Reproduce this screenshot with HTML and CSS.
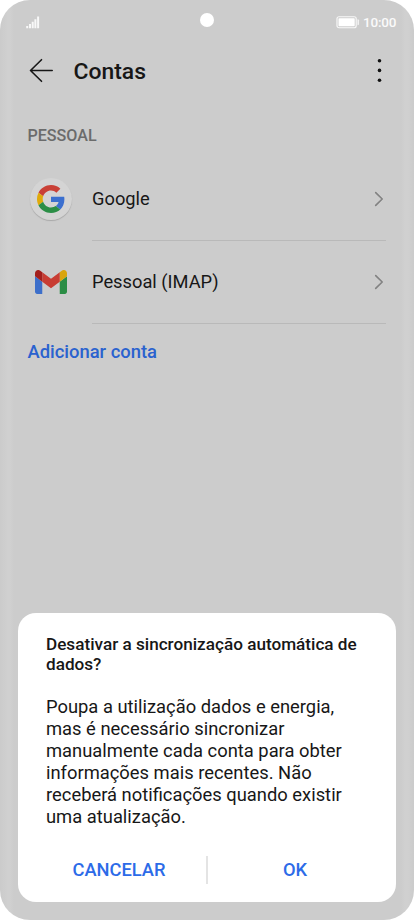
FILE: index.html
```html
<!DOCTYPE html>
<html lang="pt">
<head>
<meta charset="utf-8">
<title>Contas</title>
<link rel="stylesheet" href="styles.css">
</head>
<body>
<div class="phone">
  <div class="status">
    <svg class="signal" width="14" height="13" viewBox="0 0 14 13" fill="#f8f8f8"><path d="M0.200 10h2v2.200h-2zM3 8h2v4.200H3zM5.700 5.700h2v6.500h-2zM8.400 3.200h2v9h-2zM11.100 0.400h2v11.800h-2z"/></svg>
    <span class="camera"></span>
    <div class="status-right">
      <svg width="24" height="13" viewBox="0 0 24 13"><rect x="1" y=".75" width="19.200" height="11" rx="2" fill="none" stroke="#f7f7f7" stroke-width="1.200"/><rect x="2.500" y="2.300" width="16.200" height="7.900" rx=".6" fill="#fff"/><path d="M21.500 3.300q1.400 0 1.400 1v3.900q0 1-1.400 1z" fill="#f5f5f5"/></svg>
      <span class="time">10:00</span>
    </div>
  </div>
  <header class="header">
    <svg width="26" height="26" viewBox="0 0 26 26" fill="none" stroke="#171717" stroke-width="1.600" stroke-linecap="round" stroke-linejoin="round"><path d="M24.200 12.500H2.500M13.500 1.700L2.500 12.500l11 10.800"/></svg>
    <h1 class="title">Contas</h1>
    <svg class="more" width="6" height="26" viewBox="0 0 6 26" fill="#111"><circle cx="3.500" cy="2.700" r="1.800"/><circle cx="3.500" cy="12.400" r="1.800"/><circle cx="3.500" cy="22.200" r="1.800"/></svg>
  </header>
  <h2 class="section">PESSOAL</h2>
  <div class="row">
    <span class="icon"><span class="google">
      <svg width="28" height="28" viewBox="0 0 48 48"><path fill="#c94036" d="M24 9.5c3.54 0 6.71 1.22 9.21 3.6l6.85-6.85C35.9 2.38 30.47 0 24 0 14.62 0 6.51 5.38 2.56 13.22l7.98 6.19C12.43 13.72 17.74 9.5 24 9.5z"/><path fill="#3b6fcf" d="M46.98 24.55c0-1.57-.15-3.09-.38-4.55H24v9.02h12.94c-.58 2.96-2.26 5.48-4.78 7.18l7.73 6c4.51-4.18 7.09-10.36 7.09-17.65z"/><path fill="#e0aa0b" d="M10.53 28.59A14.5 14.5 0 0 1 9.77 24c0-1.6.27-3.14.76-4.59l-7.98-6.19A23.9 23.9 0 0 0 0 24c0 3.88.92 7.54 2.56 10.78z"/><path fill="#2b8e46" d="M24 48c6.48 0 11.93-2.13 15.89-5.81l-7.73-6c-2.15 1.45-4.92 2.3-8.16 2.3-6.26 0-11.57-4.22-13.47-9.91l-7.98 6.19C6.51 42.62 14.62 48 24 48z"/></svg>
    </span></span>
    <div class="row-body"><span>Google</span>
      <svg width="10" height="16" viewBox="0 0 10 16" fill="none" stroke="#828282" stroke-width="1.600" stroke-linecap="round" stroke-linejoin="round"><path d="M1.700 1.600L8.200 8l-6.500 6.400"/></svg>
    </div>
  </div>
  <div class="row">
    <span class="icon">
      <svg class="gmail" width="32" height="24" viewBox="52 42 88 66"><path fill="#3d6fca" d="M58 108h14V74L52 59v43c0 3.320 2.690 6 6 6"/><path fill="#2b8d45" d="M120 108h14c3.320 0 6-2.690 6-6V59l-20 15"/><path fill="#d9a50c" d="M120 48v26l20-15v-8c0-7.420-8.470-11.650-14.400-7.200"/><path fill="#c83d33" d="M72 74V48l24 18 24-18v26L96 92"/><path fill="#a31f1c" d="M52 51v8l20 15V48l-5.600-4.200c-5.940-4.450-14.400-.22-14.400 7.200"/></svg>
    </span>
    <div class="row-body"><span>Pessoal (IMAP)</span>
      <svg width="10" height="16" viewBox="0 0 10 16" fill="none" stroke="#828282" stroke-width="1.600" stroke-linecap="round" stroke-linejoin="round"><path d="M1.700 1.600L8.200 8l-6.500 6.400"/></svg>
    </div>
  </div>
  <a class="add">Adicionar conta</a>
  <section class="dialog">
    <h3 class="question">Desativar a sincronização automática de<br>dados?</h3>
    <p class="message">Poupa a utilização dados e energia,<br>mas é necessário sincronizar<br>manualmente cada conta para obter<br>informações mais recentes. Não<br>receberá notificações quando existir<br>uma atualização.</p>
    <div class="actions"><span>CANCELAR</span><span class="divider"></span><span>OK</span></div>
  </section>
</div>
</body>
</html>
```
FILE: styles.css
```css
* { box-sizing: border-box; }
body { margin: 0; background: #fff; font-family: Roboto, sans-serif; color: #171717; }
h1, h2, h3, p { margin: 0; font-weight: 500; }
svg { display: block; flex: none; }
.phone {
  width: 414px; height: 920px; overflow: hidden; border-radius: 30px;
  display: flex; flex-direction: column;
  background: linear-gradient(90deg, #cbcbcb 0, #d0d0d0 8px, #d0d0d0 10px, #cccccc 14px, #cccccc 401px, #d0d0d0 405px, #d0d0d0 408px, #cbcbcb 414px);
}
.status { height: 44px; flex: none; display: grid; grid-template-columns: 1fr 14px 1fr; align-items: center; padding: 0 18px 0 26px; }
.camera { width: 14px; height: 14px; border-radius: 50%; background: #fff; margin: -4px 0 0 -4px; }
.status-right { display: flex; justify-content: flex-end; align-items: center; gap: 3px; }
.time { font-size: 13.5px; line-height: 16px; color: #fafafa; width: 33px; white-space: nowrap; font-weight: 500; letter-spacing: -0.2px; }
.header { height: 54px; flex: none; display: flex; align-items: center; padding: 0 32px 0 28px; }
.title { font-size: 22.9px; line-height: 28px; margin: 2px 0 0 19.5px; }
.more { margin-left: auto; }
.section { margin: 28px 0 0 27.5px; font-size: 16.1px; line-height: 20px; height: 20px; flex: none; color: #6b6b6b; }
.row { height: 83px; flex: none; display: flex; padding-right: 28px; }
.section + .row { margin-top: 12px; }
.icon { width: 92px; padding: 0 11px 0 20px; flex: none; display: flex; align-items: center; justify-content: center; }
.google { width: 42px; height: 42px; margin-top: -1px; border-radius: 50%; background: #d4d4d4; box-shadow: 0 1px 1px #a8a8a8; display: flex; align-items: center; justify-content: center; }
.gmail { margin-top: -2px; }
.row-body { flex: 1; display: flex; align-items: center; justify-content: space-between; border-bottom: 1px solid #b9b9b9; font-size: 18.3px; line-height: 24px; padding: 0 2px 1px 0; }
.row-body span { padding-top: 1px; }
.add { margin: 16px 0 0 27.5px; font-size: 18.4px; line-height: 24px; font-weight: 500; color: #2a62cf; }
.dialog { width: 378px; height: 289px; margin: auto 0 18px 18px; flex: none; border-radius: 18px; background: #fff; padding: 21px 0 0 28px; }
.question { font-size: 17.15px; line-height: 20px; white-space: nowrap; }
.message { margin-top: 22px; font-size: 18.38px; line-height: 22px; font-weight: 400; white-space: nowrap; }
.actions { display: grid; grid-template-columns: 146px 2px 174px; align-items: center; margin: 26px 0 0 14px; height: 32px; text-align: center; font-size: 18.3px; line-height: 24px; font-weight: 500; color: #2c6be8; }
.actions > :first-child { margin-left: -28px; }
.divider { width: 2px; height: 28px; background: #e4e4e4; }
```
